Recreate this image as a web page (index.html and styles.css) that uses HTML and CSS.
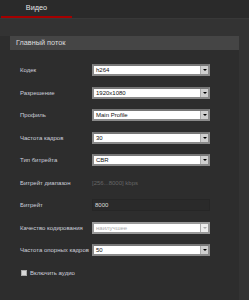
FILE: index.html
```html
<!DOCTYPE html>
<html lang="ru">
<head>
    <meta charset="UTF-8">
    <title>Видео</title>
    <link rel="stylesheet" href="styles.css">
</head>
<body>
    <div class="tabs">
        <span class="tab active">Видео</span>
    </div>
    <div class="panel">
        <div class="panel-head">Главный поток</div>
        <div class="rows">
            <div class="row">
                <span class="lbl">Кодек</span>
                <div class="sel"><span class="val">h264</span><span class="arrow"></span></div>
            </div>
            <div class="row">
                <span class="lbl">Разрешение</span>
                <div class="sel"><span class="val">1920x1080</span><span class="arrow"></span></div>
            </div>
            <div class="row">
                <span class="lbl">Профиль</span>
                <div class="sel"><span class="val">Main Profile</span><span class="arrow"></span></div>
            </div>
            <div class="row">
                <span class="lbl">Частота кадров</span>
                <div class="sel"><span class="val">30</span><span class="arrow"></span></div>
            </div>
            <div class="row">
                <span class="lbl">Тип битрейта</span>
                <div class="sel"><span class="val">CBR</span><span class="arrow"></span></div>
            </div>
            <div class="row">
                <span class="lbl">Битрейт диапазон</span>
                <span class="hint">[256...8000] kbps</span>
            </div>
            <div class="row">
                <span class="lbl">Битрейт</span>
                <div class="inp">8000</div>
            </div>
            <div class="row">
                <span class="lbl">Качество кодирования</span>
                <div class="sel disabled"><span class="val">наилучшее</span><span class="arrow"></span></div>
            </div>
            <div class="row">
                <span class="lbl">Частота опорных кадров</span>
                <div class="sel"><span class="val">50</span><span class="arrow"></span></div>
            </div>
            <div class="row check">
                <span class="box"></span>
                <span class="lbl">Включить аудио</span>
            </div>
        </div>
    </div>
</body>
</html>
```

FILE: styles.css
```css
*{margin: 0;padding: 0;box-sizing: border-box;}
body{background: #333; font-family: "Liberation Sans", Arial, sans-serif; font-size: 6px; width: 249px; height: 300px; overflow: hidden;}
.tabs{height: 19px; background: #2a2a2a; border-bottom: 1px solid #383838; padding-left: 1px; display: flex;}
.tab{width: 71px; height: 18px; line-height: 16px; text-align: center; color: #e6e6e6; font-size: 7.3px; border-bottom: 2px solid #a40000;}
.panel{margin: 17px 10px 0 0; padding-left: 10px; background: #2d2d2d; height: 264px;}
.panel-head{height: 14px; line-height: 14px; background: #454545; padding-left: 6px; color: #ddd; font-size: 7.3px;}
.rows{padding-top: 8.75px;}
.row{height: 22.5px; display: flex; align-items: center;}
.lbl{width: 82px; flex-shrink: 0; padding-left: 10px; color: #cdd0dc; white-space: nowrap; font-size: 6px;}
.sel{width: 118px; height: 12px; background: #fff; border: 2px solid #8a8a8a; border-top-color: #777; display: flex; align-items: center;}
.val{flex: 1; padding-left: 2px; color: #111; line-height: 8px;}
.arrow{width: 8px; height: 8px; background: #cfcfcf; border-left: 1px solid #aaa; position: relative;}
.arrow::after{content: ""; position: absolute; left: 2px; top: 3px; border-left: 2px solid transparent; border-right: 2px solid transparent; border-top: 2px solid #000;}
.sel.disabled{border-color: #999;}
.sel.disabled .val{color: #aaa;}
.sel.disabled .arrow{background: #eee;}
.sel.disabled .arrow::after{border-top-color: #aaa;}
.hint{color: #666; font-size: 6px;}
.inp{width: 118px; height: 12px; border: 1px solid #262626; background: #2a2a2a; color: #ddd; line-height: 10px; padding-left: 2px;}
.check .box{width: 6px; height: 6px; background: #d8d8d8; border: 1px solid #aaa; margin-left: 11px; margin-right: 3px;}
.check .lbl{width: auto; padding-left: 0;}
```
